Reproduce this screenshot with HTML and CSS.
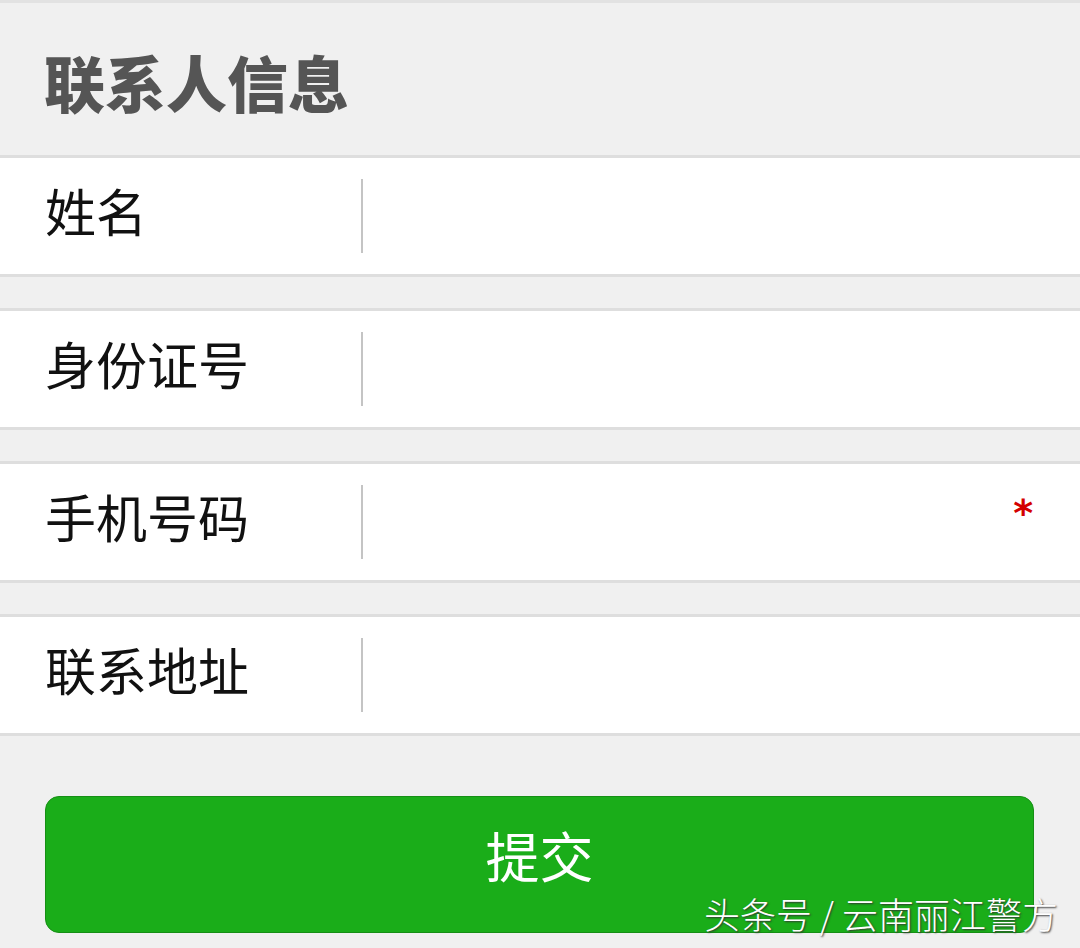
FILE: index.html
```html
<!DOCTYPE html>
<html lang="zh">
<head>
<meta charset="utf-8">
<link rel="stylesheet" href="styles.css">
</head>
<body>
<div class="page">
  <div class="header"><h1 class="title">联系人信息</h1></div>
  <div class="rows">
    <div class="row"><div class="label">姓名</div><div class="divider"></div><div class="field"></div></div>
    <div class="row"><div class="label">身份证号</div><div class="divider"></div><div class="field"></div></div>
    <div class="row"><div class="label">手机号码</div><div class="divider"></div><div class="field"><span class="req">*</span></div></div>
    <div class="row"><div class="label">联系地址</div><div class="divider"></div><div class="field"></div></div>
  </div>
  <div class="actions"><button class="submit">提交</button></div>
  <div class="watermark">头条号 / 云南丽江警方</div>
</div>
</body>
</html>
```
FILE: styles.css
```css
html, body { margin: 0; padding: 0; }
body {
  background: #f0f0f0;
  font-family: "Noto Sans CJK SC", "Noto Sans", sans-serif;
  width: 1080px;
  height: 948px;
  overflow: hidden;
}
.page { position: relative; height: 948px; border-top: 3px solid #e2e2e2; box-sizing: border-box; }
.header { height: 152px; display: flex; align-items: center; padding-left: 44px; }
.title { margin: 0; font-size: 61px; font-weight: 900; color: #555; line-height: 1; padding-top: 4px; }
.rows { display: flex; flex-direction: column; gap: 31px; }
.row {
  display: flex; align-items: center;
  height: 116px; background: #fff;
  border-top: 3px solid #dedede; border-bottom: 3px solid #dedede;
}
.label { width: 316px; padding-left: 45px; font-size: 51px; color: #111; line-height: 1; padding-bottom: 12px; }
.divider { width: 2px; height: 74px; background: #c4c4c4; }
.field { flex: 1; display: flex; justify-content: flex-end; align-items: center; padding-right: 47px; height: 100%; }
.req { color: #d40000; font-size: 38px; font-family: "DejaVu Sans", sans-serif; line-height: 1; margin-bottom: 18px; font-weight: 700; }
.actions { padding: 60px 46px 0 45px; }
.submit {
  display: block; width: 989px; height: 137px;
  background: #1aad19; border: 1px solid #168f15; border-radius: 14px;
  color: #fff; font-size: 54px; font-weight: 400; font-family: "Noto Sans CJK SC", sans-serif;
  padding: 0; padding-bottom: 20px;
}
.watermark {
  position: absolute; right: 22px; top: 891px;
  font-size: 36px; color: #fff; line-height: 1.1;
  font-family: "Noto Sans CJK SC", sans-serif; font-weight: 300;
  text-shadow: 1px 1px 2px #333;
}
```
